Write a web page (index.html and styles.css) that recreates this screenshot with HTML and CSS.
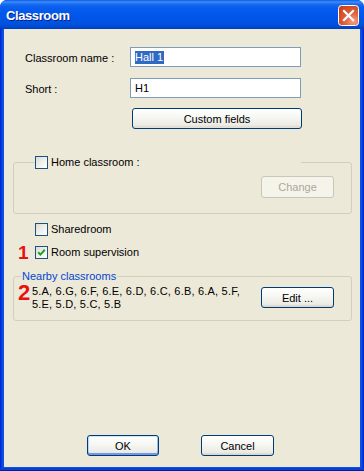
FILE: index.html
```html
<!DOCTYPE html>
<html>
<head>
<meta charset="utf-8">
<link rel="stylesheet" href="styles.css">
</head>
<body>
<div class="window">
  <div class="titlebar">
    <span class="title">Classroom</span>
    <span class="close">
      <svg width="21" height="21" viewBox="0 0 21 21">
        <defs>
          <radialGradient id="cg" cx="0.75" cy="0.8" r="0.9">
            <stop offset="0" stop-color="#F4A185"/>
            <stop offset="0.45" stop-color="#E2643F"/>
            <stop offset="1" stop-color="#C9421E"/>
          </radialGradient>
        </defs>
        <rect x="0.5" y="0.5" width="20" height="20" rx="3" ry="3" fill="url(#cg)" stroke="#FFFFFF"/>
        <path d="M6 6 L15 15 M15 6 L6 15" stroke="#FFFFFF" stroke-width="2.2" stroke-linecap="square"/>
      </svg>
    </span>
  </div>
  <div class="frame">
    <div class="body">
      <div class="fields">
        <div class="row">
          <span class="label">Classroom name :</span>
          <span class="input"><span class="sel">Hall 1</span></span>
        </div>
        <div class="row">
          <span class="label">Short :</span>
          <span class="input">H1</span>
        </div>
        <div class="row btn-row">
          <span class="label"></span>
          <button class="btn custom">Custom fields</button>
        </div>
      </div>

      <fieldset class="group home">
        <legend class="home-legend"><span class="cb"></span><span class="cb-text">Home classroom :</span></legend>
        <div class="actions">
          <button class="btn disabled">Change</button>
        </div>
      </fieldset>

      <div class="checks">
        <div class="check-row">
          <span class="marker"></span>
          <span class="cb"></span><span class="cb-text">Sharedroom</span>
        </div>
        <div class="check-row">
          <span class="marker">1</span>
          <span class="cb checked">
            <svg width="11" height="11" viewBox="0 0 11 11"><path d="M2.2 5.2 L4.4 7.6 L8.8 2.8" fill="none" stroke="#21A121" stroke-width="2"/></svg>
          </span><span class="cb-text">Room supervision</span>
        </div>
      </div>

      <fieldset class="group nearby">
        <legend class="nearby-legend">Nearby classrooms</legend>
        <div class="nearby-row">
          <span class="marker big">2</span>
          <p class="list">5.A, 6.G, 6.F, 6.E, 6.D, 6.C, 6.B, 6.A, 5.F, 5.E, 5.D, 5.C, 5.B</p>
          <button class="btn edit">Edit ...</button>
        </div>
      </fieldset>

      <div class="footer">
        <button class="btn ok">OK</button>
        <button class="btn cancel">Cancel</button>
      </div>
    </div>
  </div>
</div>
</body>
</html>
```
FILE: styles.css
```css
html, body {
  margin: 0;
  padding: 0;
}
body {
  width: 364px;
  height: 471px;
  overflow: hidden;
  background: #FFFFFF;
  font-family: "Liberation Sans", Arial, sans-serif;
  font-size: 11px;
  color: #000000;
}
.window {
  width: 364px;
  height: 471px;
  display: flex;
  flex-direction: column;
  border-radius: 7px 7px 0 0;
  overflow: hidden;
  background: #0842D8;
}
.titlebar {
  height: 29px;
  flex: none;
  display: flex;
  align-items: center;
  justify-content: space-between;
  padding: 0 5px 0 6px;
  box-sizing: border-box;
  background: linear-gradient(to bottom, #0A5BE6 0px, #3E8EF8 2px, #1A6CF2 4px, #0A5EEE 7px, #0058EB 14px, #0055E5 20px, #004FDB 25px, #0044C8 28px, #003CB4 29px);
}
.title {
  color: #FFFFFF;
  font-weight: bold;
  font-size: 13px;
  letter-spacing: -0.4px;
  text-shadow: 1px 1px 0 #0A1D85;
  margin-top: 2px;
}
.close {
  width: 21px;
  height: 21px;
  display: block;
  margin-top: 2px;
}
.close svg {
  display: block;
}
.frame {
  flex: 1;
  padding: 0 4px 4px 4px;
  background: linear-gradient(to right, #0019CF 0px, #0848E0 2px, #0A55E8 4px, #0A55E8 calc(100% - 4px), #0848E0 calc(100% - 2px), #0019CF 100%);
  box-shadow: inset 0 -1px 0 #001EA0, inset 0 -3px 0 #0B3FD3;
  display: flex;
}
.body {
  flex: 1;
  background: #ECE9D8;
  display: flex;
  flex-direction: column;
  padding: 18px 8px 11px 9px;
  box-sizing: border-box;
}
.fields {
  padding-left: 12px;
}
.row {
  display: flex;
  align-items: center;
  height: 20px;
}
.row + .row {
  margin-top: 11px;
}
.row.btn-row {
  margin-top: 10px;
  height: 21px;
}
.label {
  width: 105px;
  flex: none;
  padding-top: 2px;
}
.input {
  width: 171px;
  height: 20px;
  box-sizing: border-box;
  border: 1px solid #7F9DB9;
  background: #FFFFFF;
  padding-left: 4px;
  display: flex;
  align-items: center;
  font-size: 11px;
}
.sel {
  background: #316AC5;
  color: #FFFFFF;
  line-height: 13px;
  padding-right: 1px;
}
.btn {
  font-family: "Liberation Sans", Arial, sans-serif;
  font-size: 11px;
  color: #000000;
  border: 1px solid #003C74;
  border-radius: 3px;
  background: linear-gradient(to bottom, #FFFFFF 0%, #F6F6F2 45%, #ECEBE5 85%, #D6D0C5 100%);
  padding: 0;
  margin: 0;
  box-sizing: border-box;
  height: 21px;
}
.btn.custom {
  width: 170px;
  margin-left: 2px;
  box-shadow: inset 0 -1px 0 #E3E0D6;
}
.group {
  margin: 0;
  border: 1px solid #D0D0BF;
  border-radius: 3px;
  min-inline-size: 0;
}
.home {
  margin-top: 27px;
  padding: 0 17px 15px 0;
}
.home-legend {
  padding: 0;
  margin-left: 21px;
  width: 266px;
  height: 13px;
  display: flex;
  align-items: center;
  background: #ECE9D8;
}
.cb {
  width: 13px;
  height: 13px;
  box-sizing: border-box;
  border: 1px solid #1C5180;
  background: linear-gradient(135deg, #DCDCD7 0%, #F2F2EE 60%, #FFFFFF 100%);
  flex: none;
  display: block;
}
.cb svg {
  display: block;
  margin: 0;
}
.cb-text {
  margin-left: 3px;
  line-height: 13px;
}
.actions {
  display: flex;
  justify-content: flex-end;
  margin-top: 7px;
}
.btn.disabled {
  width: 73px;
  height: 22px;
  color: #ACA899;
  border-color: #C9C7BA;
  background: #F5F4EA;
}
.checks {
  margin-top: 9px;
  display: flex;
  flex-direction: column;
  gap: 10px;
  padding-left: 5px;
}
.check-row {
  display: flex;
  align-items: center;
  height: 13px;
}
.marker {
  width: 17px;
  flex: none;
  color: #E8110F;
  font-weight: bold;
  font-size: 19px;
  line-height: 13px;
}
.nearby {
  margin-top: 11px;
  padding: 0 17px 9px 4px;
}
.nearby-legend {
  padding: 0 1px;
  margin-left: 3px;
  color: #0046D5;
  line-height: 13px;
  height: 13px;
}
.nearby-row {
  display: flex;
  align-items: flex-start;
  padding-top: 2px;
}
.marker.big {
  width: 14px;
  line-height: 21px;
  margin-top: -3px;
  font-size: 22px;
}
.list {
  margin: 0;
  width: 222px;
  line-height: 13px;
  letter-spacing: 0.2px;
}
.btn.edit {
  margin-left: auto;
  margin-top: 2px;
  width: 73px;
  flex: none;
}
.footer {
  margin-top: auto;
  display: flex;
  gap: 42px;
  padding-left: 74px;
}
.btn.ok {
  width: 72px;
  box-shadow: inset 0 1px 0 #CEE7FF, inset 0 -2px 0 #7596E6, inset 1px 0 0 #B8D6FB, inset -1px 0 0 #9AB9F0;
}
.btn.cancel {
  width: 73px;
}
```
